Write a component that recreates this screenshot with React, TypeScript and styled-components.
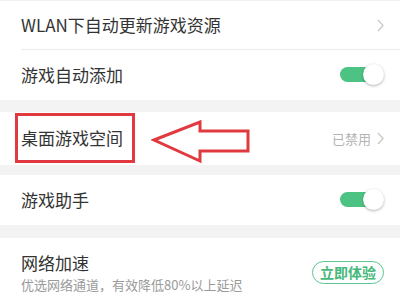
import React from "react"
import styled, { createGlobalStyle } from "styled-components"

const Global = createGlobalStyle`
  body {
    margin: 0;
    background: #fff;
    font-family: "Noto Sans CJK SC", "Noto Sans", sans-serif;
  }
`

const Page = styled.div`
  width: 400px;
  height: 300px;
  overflow: hidden;
  background: #fff;
  border-top: 1px solid #f0f0f0;
  box-sizing: border-box;
`

const Row = styled.div<{ $h: number; $divider?: boolean; $top?: number }>`
  position: relative;
  display: flex;
  align-items: center;
  justify-content: space-between;
  height: ${p => p.$h}px;
  margin-left: 21px;
  padding-right: 16px;
  padding-top: ${p => p.$top || 0}px;
  box-sizing: border-box;
  border-bottom: ${p => (p.$divider ? "1px solid #ececec" : "none")};
`

const Band = styled.div<{ $h: number }>`
  height: ${p => p.$h}px;
  background: #f3f3f3;
`

const Label = styled.div`
  font-size: 17px;
  color: #333;
  line-height: 1.2;
`

const Sub = styled.div`
  font-size: 13px;
  color: #9a9a9a;
  margin-top: 4px;
  line-height: 1.2;
`

const Right = styled.div`
  display: flex;
  align-items: center;
  gap: 6px;
  font-size: 13px;
  color: #b3b3b3;
`

const Chevron = () => (
  <svg width="7" height="13" viewBox="0 0 7 13">
    <polyline points="1,1 6,6.5 1,12" fill="none" stroke="#c8c8c8" strokeWidth="1.3" />
  </svg>
)

const Track = styled.div`
  position: relative;
  width: 44px;
  height: 22px;
`

const TrackBar = styled.div`
  position: absolute;
  left: 0;
  top: 3px;
  width: 40px;
  height: 15px;
  border-radius: 8px;
  background: #4cc283;
`

const Thumb = styled.div`
  position: absolute;
  right: 0;
  top: 0;
  width: 21px;
  height: 21px;
  border-radius: 50%;
  background: #fff;
  box-shadow: 0 1px 3px rgba(0, 0, 0, 0.3);
`

const Toggle = () => (
  <Track>
    <TrackBar />
    <Thumb />
  </Track>
)

const Pill = styled.div`
  border: 1.5px solid #5cc590;
  border-radius: 12px;
  color: #45b97a;
  font-size: 14px;
  font-weight: 700;
  padding: 0 7px;
  height: 21px;
  line-height: 21px;
`

const Highlight = styled.div`
  position: absolute;
  left: -6px;
  top: 1px;
  width: 120px;
  height: 50px;
  border: 3px solid #e03a40;
  box-sizing: border-box;
`

const ArrowSvg = styled.svg`
  position: absolute;
  left: 130px;
  top: 8px;
`

const App: React.FC = () => (
  <Page>
    <Global />
    <Row $h={49} $divider>
      <Label>WLAN下自动更新游戏资源</Label>
      <Chevron />
    </Row>
    <Row $h={50}>
      <Label>游戏自动添加</Label>
      <Toggle />
    </Row>
    <Band $h={12} />
    <Row $h={53}>
      <Label>桌面游戏空间</Label>
      <Right>
        已禁用
        <Chevron />
      </Right>
      <Highlight />
      <ArrowSvg width="102" height="46" viewBox="0 0 102 46">
        <polygon
          points="3,20 49,2 49,11 97,11 97,31 49,31 49,41"
          fill="none"
          stroke="#e03a40"
          strokeWidth="3"
          strokeLinejoin="miter"
        />
      </ArrowSvg>
    </Row>
    <Band $h={10} />
    <Row $h={50}>
      <Label>游戏助手</Label>
      <Toggle />
    </Row>
    <Band $h={13} />
    <Row $h={62} $top={7}>
      <div>
        <Label>网络加速</Label>
        <Sub>优选网络通道，有效降低80%以上延迟</Sub>
      </div>
      <Pill>立即体验</Pill>
    </Row>
  </Page>
)

export default App
